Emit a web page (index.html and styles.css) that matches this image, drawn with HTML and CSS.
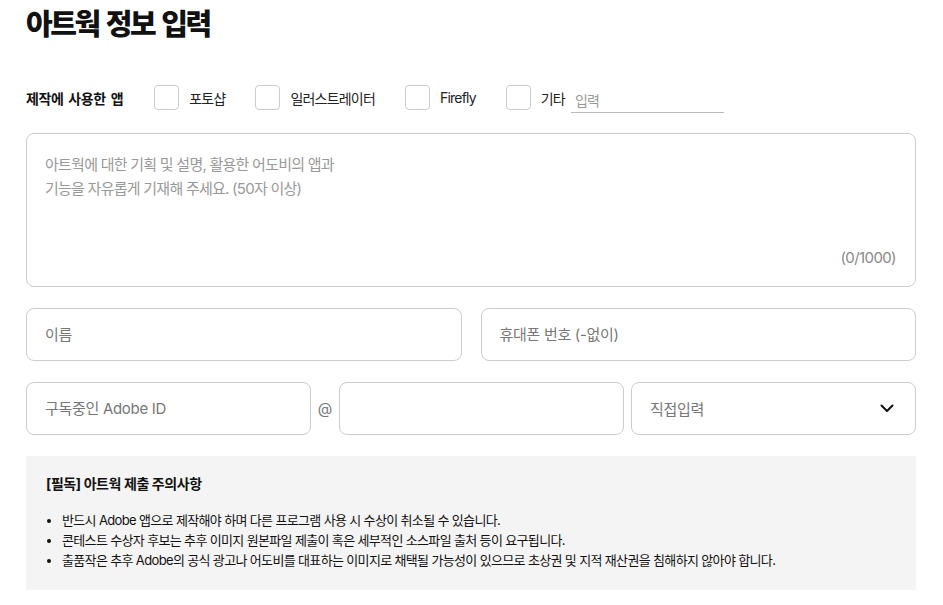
FILE: index.html
```html
<!doctype html>
<html lang="ko">
<head>
    <meta charset="UTF-8">
    <meta name="viewport" content="width=device-width, initial-scale=1.0">
    <title>아트웍 정보 입력</title>
    <link rel="stylesheet" href="styles.css">
</head>
<body>

<div class="wrap">
    <h2 class="title">아트웍 정보 입력</h2>

    <div class="apps">
        <span class="apps-label">제작에 사용한 앱</span>
        <label class="app"><span class="box"></span>포토샵</label>
        <label class="app"><span class="box"></span>일러스트레이터</label>
        <label class="app"><span class="box"></span>Firefly</label>
        <label class="app"><span class="box"></span>기타</label>
        <input type="text" class="etc" placeholder="입력">
    </div>

    <div class="desc">
        <textarea placeholder="아트웍에 대한 기획 및 설명, 활용한 어도비의 앱과&#10;기능을 자유롭게 기재해 주세요. (50자 이상)"></textarea>
        <span class="count">(0/1000)</span>
    </div>

    <div class="row">
        <input type="text" class="field" placeholder="이름">
        <input type="text" class="field" placeholder="휴대폰 번호 (-없이)">
    </div>

    <div class="row id-row">
        <input type="text" class="field" placeholder="구독중인 Adobe ID">
        <span class="at">@</span>
        <input type="text" class="field">
        <div class="field select">
            <span>직접입력</span>
            <svg width="14" height="9" viewBox="0 0 14 9"><path d="M1.5 1.5 L7 7 L12.5 1.5" fill="none" stroke="#111" stroke-width="2" stroke-linecap="round" stroke-linejoin="round"/></svg>
        </div>
    </div>

    <div class="notice">
        <h3>[필독] 아트웍 제출 주의사항</h3>
        <ul>
            <li>반드시 Adobe 앱으로 제작해야 하며 다른 프로그램 사용 시 수상이 취소될 수 있습니다.</li>
            <li>콘테스트 수상자 후보는 추후 이미지 원본파일 제출이 혹은 세부적인 소스파일 출처 등이 요구됩니다.</li>
            <li>출품작은 추후 Adobe의 공식 광고나 어도비를 대표하는 이미지로 채택될 가능성이 있으므로 초상권 및 지적 재산권을 침해하지 않아야 합니다.</li>
        </ul>
    </div>
</div>

</body>
</html>
```

FILE: styles.css
```css
body{
    margin: 0;
    background-color: #fff;
    color: #111;
    font-family: Inter, "Noto Sans CJK KR", sans-serif;
}
.wrap{
    width: 890px;
    padding: 0 26px;
}
.title{
    margin: 0;
    padding-top: 5px;
    font-size: 29px;
    line-height: 40px;
    font-weight: 800;
    letter-spacing: -2.4px;
    word-spacing: 3px;
}

/* 앱 선택 */
.apps{
    display: flex;
    align-items: center;
    margin-top: 40px;
    height: 25px;
}
.apps-label{
    font-size: 14px;
    font-weight: 700;
    letter-spacing: -0.4px;
    word-spacing: 2px;
    margin-right: 31px;
}
.app{
    display: flex;
    align-items: center;
    font-size: 14px;
    letter-spacing: -0.8px;
    color: #222;
    margin-right: 30px;
}
.app .box{
    width: 23px;
    height: 23px;
    border: 1px solid #ccc;
    border-radius: 4px;
    margin-right: 10px;
    background-color: #fff;
}
.app:last-of-type{
    margin-right: 6px;
}
.etc{
    width: 153px;
    height: 24px;
    margin-top: 6px;
    padding: 0 4px;
    box-sizing: border-box;
    border: none;
    border-bottom: 1px solid #bbb;
    outline: none;
    font-family: inherit;
    font-size: 14px;
    letter-spacing: -0.8px;
}
.etc::placeholder{
    color: #999;
}

/* 설명 */
.desc{
    position: relative;
    margin-top: 23px;
}
textarea{
    display: block;
    width: 100%;
    height: 154px;
    box-sizing: border-box;
    border: 1px solid #ccc;
    border-radius: 8px;
    padding: 19px 18px;
    resize: none;
    outline: none;
    font-family: inherit;
    font-size: 15px;
    line-height: 24px;
    letter-spacing: -0.75px;
}
textarea::placeholder{
    color: #999;
}
.count{
    position: absolute;
    right: 20px;
    bottom: 20px;
    font-size: 15px;
    color: #888;
    letter-spacing: -0.6px;
}

/* 입력 행 */
.row{
    display: flex;
    align-items: center;
    gap: 19px;
    margin-top: 21px;
}
.id-row{
    gap: 0;
}
.field{
    flex: 1;
    min-width: 0;
    height: 53px;
    box-sizing: border-box;
    border: 1px solid #ccc;
    border-radius: 8px;
    padding: 0 18px;
    outline: none;
    font-family: inherit;
    font-size: 15px;
    letter-spacing: -0.3px;
    color: #111;
    background-color: #fff;
}
.field::placeholder{
    color: #777;
}
.at{
    width: 28px;
    text-align: center;
    font-size: 15px;
    color: #777;
}
.select{
    display: flex;
    align-items: center;
    justify-content: space-between;
    color: #777;
    margin-left: 7px;
}
.select svg{
    margin-right: 3px;
}

/* 주의사항 */
.notice{
    margin-top: 21px;
    background-color: #f4f4f4;
    padding: 18px 20px 20px;
    height: 134px;
    box-sizing: border-box;
}
.notice h3{
    margin: 0;
    font-size: 14px;
    font-weight: 700;
    letter-spacing: -0.4px;
    line-height: 20px;
}
.notice ul{
    margin: 16px 0 0;
    padding: 0 0 0 16px;
}
.notice li{
    font-size: 13px;
    line-height: 20px;
    letter-spacing: -0.65px;
    color: #111;
}
```
